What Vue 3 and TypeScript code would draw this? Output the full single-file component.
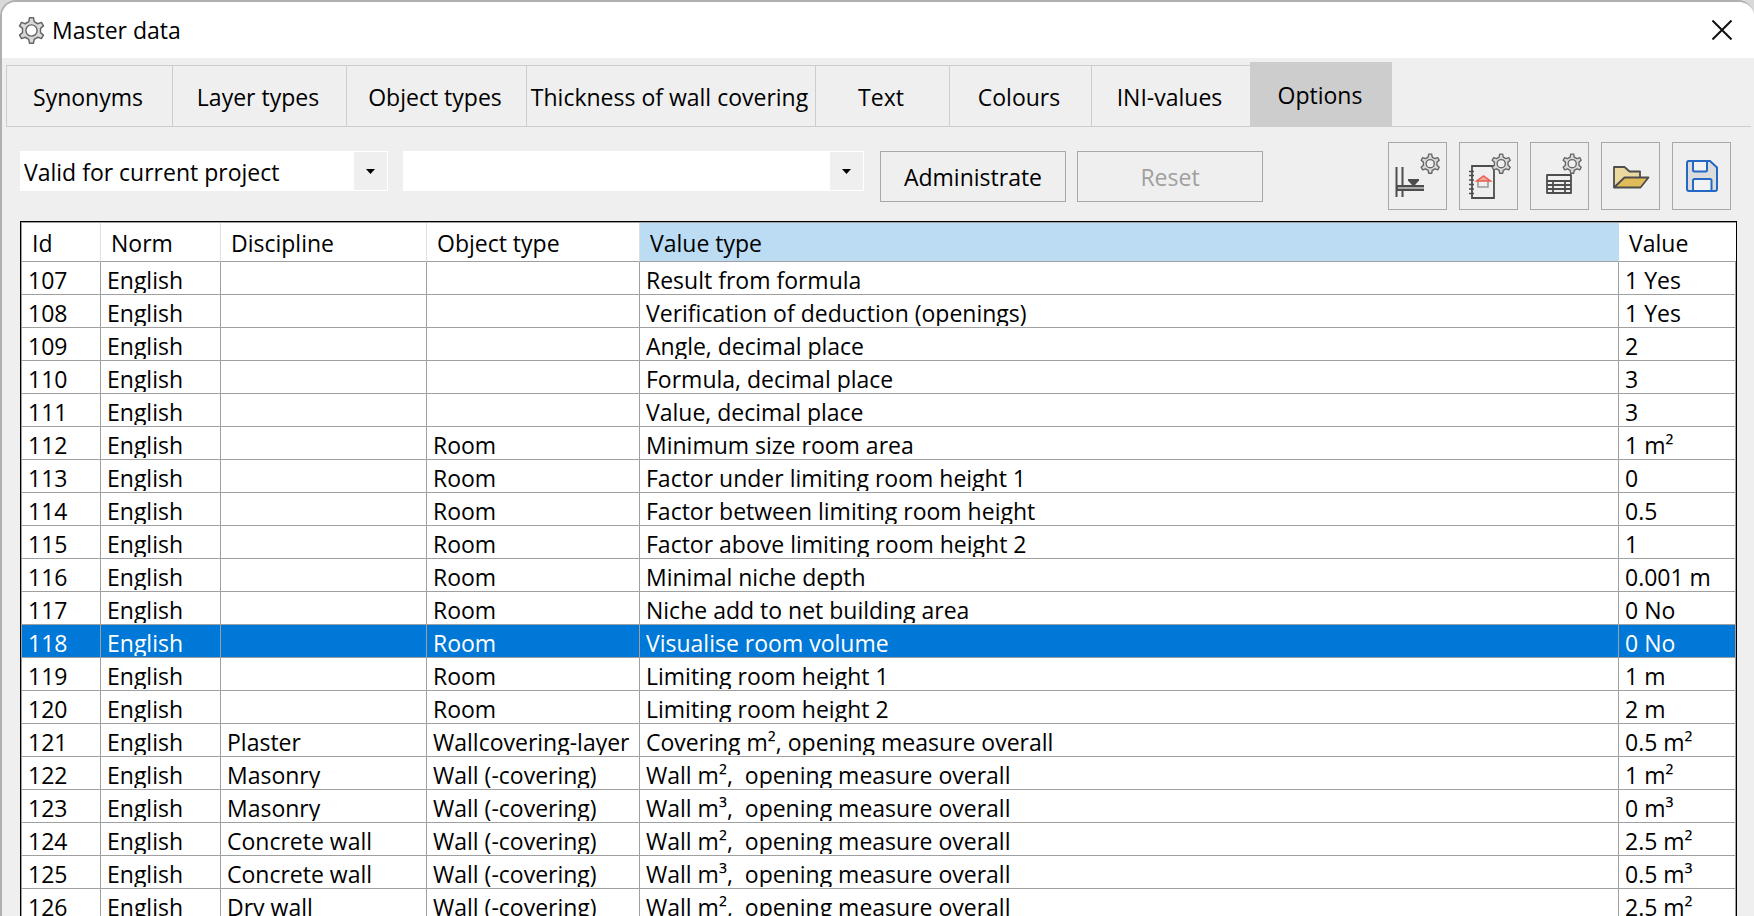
<script setup lang="ts">
import { ref } from 'vue'

interface Option {
  id: number
  norm: string
  discipline: string
  objectType: string
  valueType: string
  value: string
}

const tabs = ['Synonyms', 'Layer types', 'Object types', 'Thickness of wall covering', 'Text', 'Colours', 'INI-values', 'Options']
const activeTab = ref('Options')
const selectedId = ref(118)
const scope = ref('Valid for current project')
const preset = ref('')

const row = (id: number, discipline: string, objectType: string, valueType: string, value: string): Option => ({
  id, norm: 'English', discipline, objectType, valueType, value,
})

const rows: Option[] = [
  row(107, '', '', 'Result from formula', '1 Yes'),
  row(108, '', '', 'Verification of deduction (openings)', '1 Yes'),
  row(109, '', '', 'Angle, decimal place', '2'),
  row(110, '', '', 'Formula, decimal place', '3'),
  row(111, '', '', 'Value, decimal place', '3'),
  row(112, '', 'Room', 'Minimum size room area', '1 m²'),
  row(113, '', 'Room', 'Factor under limiting room height 1', '0'),
  row(114, '', 'Room', 'Factor between limiting room height', '0.5'),
  row(115, '', 'Room', 'Factor above limiting room height 2', '1'),
  row(116, '', 'Room', 'Minimal niche depth', '0.001 m'),
  row(117, '', 'Room', 'Niche add to net building area', '0 No'),
  row(118, '', 'Room', 'Visualise room volume', '0 No'),
  row(119, '', 'Room', 'Limiting room height 1', '1 m'),
  row(120, '', 'Room', 'Limiting room height 2', '2 m'),
  row(121, 'Plaster', 'Wallcovering-layer', 'Covering m², opening measure overall', '0.5 m²'),
  row(122, 'Masonry', 'Wall (-covering)', 'Wall m²,  opening measure overall', '1 m²'),
  row(123, 'Masonry', 'Wall (-covering)', 'Wall m³,  opening measure overall', '0 m³'),
  row(124, 'Concrete wall', 'Wall (-covering)', 'Wall m²,  opening measure overall', '2.5 m²'),
  row(125, 'Concrete wall', 'Wall (-covering)', 'Wall m³,  opening measure overall', '0.5 m³'),
  row(126, 'Dry wall', 'Wall (-covering)', 'Wall m²,  opening measure overall', '2.5 m²'),
]

// Six-toothed gear outline in a 24 by 24 box, first tooth pointing up.
function gearPath(): string {
  const corners: [number, number][] = [[-17, 8.2], [-9, 11.4], [9, 11.4], [17, 8.2]]
  const points: string[] = []
  for (let tooth = 0; tooth < 6; tooth++) {
    for (const [offset, radius] of corners) {
      const a = ((tooth * 60 + offset) * Math.PI) / 180
      points.push(`${(12 + radius * Math.sin(a)).toFixed(2)} ${(12 - radius * Math.cos(a)).toFixed(2)}`)
    }
  }
  return `M${points.join('L')}z`
}
const gear = gearPath()
</script>

<template>
  <div class="desktop">
    <section class="window" aria-label="Master data">
      <header class="titlebar">
        <svg class="title-icon" viewBox="0 0 24 24" fill="#d9d9d9" stroke="#666" stroke-width="1.300" stroke-linejoin="round">
          <path :d="gear" /><circle cx="12" cy="12" r="5" fill="#fff" />
        </svg>
        <h1>Master data</h1>
        <button class="close" type="button" aria-label="Close">
          <svg viewBox="0 0 20 20" fill="none" stroke="#111" stroke-width="2"><path d="M0.500 0.500l19 19M19.500 0.500l-19 19" /></svg>
        </button>
      </header>

      <nav class="tabs" role="tablist">
        <button
          v-for="(tab, i) in tabs"
          :key="tab"
          type="button"
          role="tab"
          :class="['tab', 'tab-' + i, { active: tab === activeTab }]"
          :aria-selected="tab === activeTab"
          @click="activeTab = tab"
        >{{ tab }}</button>
      </nav>

      <div class="toolbar">
        <div class="combo scope">
          <select v-model="scope" aria-label="Scope"><option>Valid for current project</option></select>
          <span class="arrow"><svg viewBox="0 0 9 5"><path d="M0 0h9L4.500 5z" /></svg></span>
        </div>
        <div class="combo preset">
          <select v-model="preset" aria-label="Preset"><option value=""></option></select>
          <span class="arrow"><svg viewBox="0 0 9 5"><path d="M0 0h9L4.500 5z" /></svg></span>
        </div>
        <button class="push admin" type="button">Administrate</button>
        <button class="push" type="button" disabled>Reset</button>
        <div class="tools">
          <button class="tool" type="button" aria-label="Level settings">
            <svg viewBox="0 0 57 66" fill="none">
              <path d="M7.500 24v30M13.500 24v30" stroke="#4d4d4d" stroke-width="2" />
              <path d="M8 42h27v6H8z" fill="#4d4d4d" /><path d="M9 44h26v2H9z" fill="#aaa" />
              <path d="M19 36h11v1.500l-4 4.500h-3l-4-4.500z" fill="#4d4d4d" />
              <g transform="translate(31 10.500) scale(.85)" fill="#d9d9d9" stroke="#666" stroke-width="1.600" stroke-linejoin="round"><path :d="gear" /><circle cx="12" cy="12" r="4.800" fill="#efefef" /></g>
            </svg>
          </button>
          <button class="tool" type="button" aria-label="Report settings">
            <svg viewBox="0 0 57 66" fill="none">
              <path d="M12 23h22v32H12z" stroke="#4d4d4d" stroke-width="1.800" />
              <path d="M9 28.500h5M9 32.500h5M9 37h5M9 41.500h5M9 46h5M9 50.500h5" stroke="#4d4d4d" stroke-width="1.600" />
              <path d="M18 38v6h10v-6" stroke="#999" stroke-width="1.600" />
              <path d="M16.500 38L23.500 33l7 5z" fill="#f3a79c" stroke="#e8604f" stroke-width="1.500" />
              <g transform="translate(31 10.500) scale(.85)" fill="#d9d9d9" stroke="#666" stroke-width="1.600" stroke-linejoin="round"><path :d="gear" /><circle cx="12" cy="12" r="4.800" fill="#efefef" /></g>
            </svg>
          </button>
          <button class="tool" type="button" aria-label="Table settings">
            <svg viewBox="0 0 57 66" fill="none">
              <g transform="translate(31 10.500) scale(.85)" fill="#d9d9d9" stroke="#666" stroke-width="1.600" stroke-linejoin="round"><path :d="gear" /><circle cx="12" cy="12" r="4.800" fill="#efefef" /></g>
              <path d="M16 32h24v18H16zM16 38h24M16 42h24M16 46h24M22 38v12M34 38v12" fill="#efefef" stroke="#4d4d4d" stroke-width="1.800" stroke-linejoin="round" />
            </svg>
          </button>
          <button class="tool" type="button" aria-label="Open">
            <svg viewBox="0 0 57 66" fill="none" stroke="#4d4d4d" stroke-width="1.800" stroke-linejoin="round">
              <path d="M12 44.500V24h10.500l5 4.500H38V34" fill="#ecd9a0" />
              <path d="M12 44.500L22.500 34.500H46.500L38.500 44.500z" fill="#e0bb59" />
            </svg>
          </button>
          <button class="tool" type="button" aria-label="Save">
            <svg viewBox="0 0 57 66" fill="none" stroke="#2468c6" stroke-width="2" stroke-linejoin="round">
              <path d="M15 18h22l7 6.500V46a2 2 0 0 1-2 2H16a2 2 0 0 1-2-2V20a2 2 0 0 1 2-2z" fill="#dcdcdc" />
              <path d="M20 18v9a1.500 1.500 0 0 0 1.500 1.500h11A1.500 1.500 0 0 0 34 27v-9zM20 48V37.500a1.500 1.500 0 0 1 1.500-1.500h15.500a1.500 1.500 0 0 1 1.500 1.500V48z" fill="#f2f2f2" />
            </svg>
          </button>
        </div>
      </div>

      <div class="grid">
        <table>
          <colgroup>
            <col class="c-id"><col class="c-norm"><col class="c-disc"><col class="c-obj"><col><col class="c-val">
          </colgroup>
          <thead>
            <tr><th>Id</th><th>Norm</th><th>Discipline</th><th>Object type</th><th class="sorted">Value type</th><th>Value</th></tr>
          </thead>
          <tbody>
            <tr v-for="r in rows" :key="r.id" :class="{ selected: r.id === selectedId }" @click="selectedId = r.id">
              <td><div>{{ r.id }}</div></td>
              <td><div>{{ r.norm }}</div></td>
              <td><div>{{ r.discipline }}</div></td>
              <td><div>{{ r.objectType }}</div></td>
              <td><div>{{ r.valueType }}</div></td>
              <td><div>{{ r.value }}</div></td>
            </tr>
          </tbody>
        </table>
      </div>
    </section>
  </div>
</template>

<style>
html, body { height: 100%; overflow: hidden; background: #d9d9d9; }
#app { height: 100%; }
</style>

<style scoped>
* { box-sizing: border-box; }
.desktop {
  height: 100vh;
  overflow: hidden;
  font: 23px/32px "Segoe UI", "Open Sans", "Noto Sans", sans-serif;
  color: #000;
}
button, select { font: inherit; color: inherit; margin: 0; padding: 0; border-radius: 0; }
.window {
  height: calc(100% + 20px);
  display: flex;
  flex-direction: column;
  overflow: hidden;
  background: #efefef;
  border: 2px solid #b0b0b0;
  border-right-width: 0;
  border-radius: 16px 16px 0 0;
}
.titlebar {
  flex: none;
  height: 56px;
  display: flex;
  align-items: center;
  padding: 0 20px 0 16px;
  background: #fff;
}
.title-icon { width: 27px; height: 27px; }
h1 { margin: 0 0 0 7px; font-size: 23px; font-weight: 400; }
.close { margin-left: auto; width: 22px; height: 22px; border: 0; background: none; }
.close svg { display: block; width: 20px; height: 20px; }
.tabs {
  flex: none;
  display: flex;
  align-items: flex-end;
  height: 69px;
  margin: 0 3px 0 4px;
  border-bottom: 1px solid #cdcdcd;
}
.tab {
  height: 61px;
  padding: 2px 3px 0 0;
  border: 1px solid #cdcdcd;
  border-width: 1px 0 0 1px;
  background: none;
  white-space: nowrap;
}
.tab-0 { width: 166px; }
.tab-1 { width: 174px; }
.tab-2 { width: 180px; }
.tab-3 { width: 289px; }
.tab-4 { width: 134px; }
.tab-5 { width: 142px; }
.tab-6 { width: 159px; }
.tab-7 { width: 142px; }
.tab.active { height: 64px; background: #cdcdcd; padding-top: 0; }
.toolbar { flex: none; display: flex; align-items: flex-start; padding: 15px 23px 11px 18px; }
.combo { display: flex; height: 40px; margin-top: 9px; padding: 1px; background: #fff; }
.scope { width: 368px; }
.preset { width: 461px; margin-left: 15px; }
.combo select {
  flex: 1;
  min-width: 0;
  padding: 2px 0 0 3px;
  appearance: none;
  border: 0;
  background: #fff;
}
.arrow { width: 33px; display: flex; align-items: center; justify-content: center; background: #efefef; pointer-events: none; }
.arrow svg { width: 9px; height: 5px; }
.push {
  width: 186px;
  height: 51px;
  margin: 9px 0 0 11px;
  border: 1px solid #a8a8a8;
  background: #efefef;
}
.push.admin { margin-left: 16px; }
.push:disabled { color: #9f9f9f; }
.tools { display: flex; gap: 12px; margin-left: auto; }
.tool { width: 59px; height: 68px; border: 1px solid #a8a8a8; background: #efefef; }
.tool svg { display: block; width: 57px; height: 66px; }
.grid {
  flex: 1;
  min-height: 0;
  overflow: hidden;
  margin: 0 17px 0 18px;
  border: 1px solid #000;
  background: #fff;
}
table { width: 100%; table-layout: fixed; border-collapse: separate; border-spacing: 0; border-top: 1px solid #a0a0a0; border-left: 1px solid #a0a0a0; }
.c-id { width: 79px; }
.c-norm { width: 120px; }
.c-disc { width: 206px; }
.c-obj { width: 213px; }
.c-val { width: 117px; }
th {
  height: 39px;
  padding: 2px 0 0 10px;
  font-weight: 400;
  text-align: left;
  border-right: 1px solid #e0e0e0;
  border-bottom: 1px solid #a0a0a0;
}
th:last-child { border-right: 0; }
.sorted { background: #bbdcf3; border-right-color: #bbdcf3; }
td {
  height: 33px;
  padding: 0 0 0 6px;
  border-right: 1px solid #a0a0a0;
  border-bottom: 1px solid #a0a0a0;
}
td div { height: 31px; margin-bottom: 1px; line-height: 36px; overflow: hidden; white-space: pre; }
.selected td { background: #0078d7; color: #fff; }
</style>
